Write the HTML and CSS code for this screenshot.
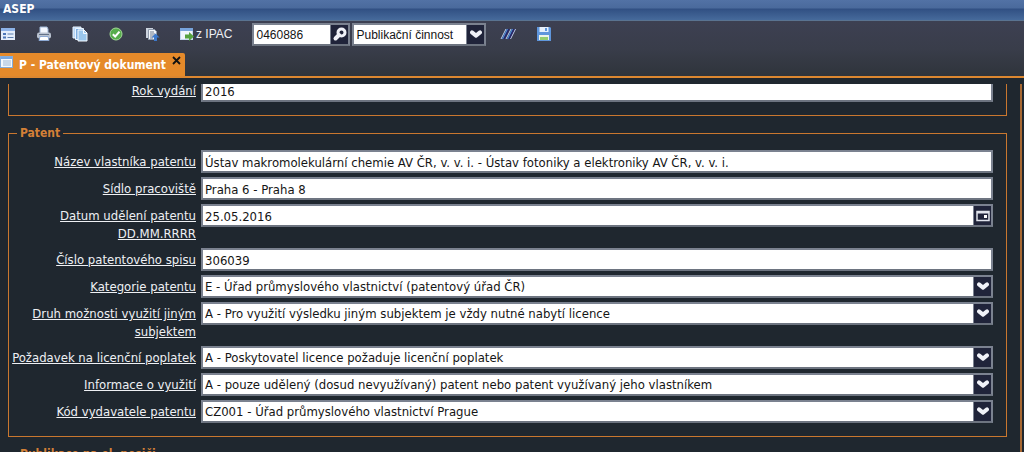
FILE: index.html
```html
<!DOCTYPE html>
<html lang="cs">
<head>
<meta charset="utf-8">
<title>ASEP</title>
<link rel="stylesheet" href="styles.css">
</head>
<body>
<svg class="defs" aria-hidden="true">
  <symbol id="heart" viewBox="0 0 12 9"><path d="M2 2.400 6 5.600 10 2.400" fill="none" stroke="#f0f2f8" stroke-width="4" stroke-linecap="round" stroke-linejoin="round"/></symbol>
</svg>
<header class="title">ASEP</header>
<div class="top">
  <div class="toolbar">
    <button class="tool" aria-label="Formulář"><svg width="16" height="16" viewBox="0 0 16 16"><rect x="1" y="2" width="14" height="12" fill="#e4eefb"/><path d="M1 2h14v3H1z" fill="#8eb3e8"/><path d="M3 7h3v2H3zM3 10.500h3v2H3z" fill="#4c76b8"/><path d="M7.500 8h6M7.500 11.500h6" stroke="#5d7fae"/></svg></button>
    <button class="tool" aria-label="Tisk"><svg width="16" height="16" viewBox="0 0 16 16"><path d="M4 1h7l1 2v5H4z" fill="#f4f8ff" stroke="#9fb6d6"/><rect x="1" y="6.500" width="14" height="6" rx="2" fill="#b9c2d0"/><path d="M3 8.500h10" stroke="#657287"/><path d="M4 10.500h8l1 4H3z" fill="#fff" stroke="#8da9d3"/></svg></button>
    <button class="tool" aria-label="Kopírovat"><svg width="16" height="16" viewBox="0 0 16 16"><path d="M1 1h8v11H1z" fill="#b7d5f5" stroke="#eaf4ff"/><path d="M3.500 2.500h8v11h-8z" fill="#7faee0" stroke="#eaf4ff"/><path d="M6 4h6l3 3v8H6z" fill="#9bc7ed" stroke="#f5faff"/><path d="M11.500 4v3.500H15" fill="none" stroke="#f5faff"/></svg></button>
    <button class="tool" aria-label="Potvrdit"><svg width="16" height="16" viewBox="0 0 16 16"><circle cx="8" cy="8" r="6" fill="#57ad4c" stroke="#a3da98"/><path d="M4.800 8.200 7.200 10.500 11.500 5.600" fill="none" stroke="#fff" stroke-width="2"/></svg></button>
    <button class="tool" aria-label="Odeslat"><svg width="16" height="16" viewBox="0 0 16 16"><path d="M2 2h7v10H2z" fill="#cdd4df"/><path d="M4.500 3.500h6l2 2v8h-8z" fill="#f2f5fa" stroke="#8f9aab"/><path d="M6 6h4M6 8h5M6 10h4M6 12h3" stroke="#6e7a8d"/><path d="M11.500 7.500 15.500 11.500H13V15h-3v-3.500H7.500z" fill="#3c78cb"/></svg></button>
    <button class="tool" aria-label="Import z IPAC"><svg width="16" height="16" viewBox="0 0 16 16"><rect x="0.500" y="2.500" width="12" height="11" fill="#eff5fc" stroke="#c5d8ef"/><path d="M0 2h13v3H0z" fill="#78a4dc"/><path d="M5 8.500h4V6l5 4.500L9 15v-2.500H5z" fill="#55a13f"/></svg><span>z IPAC</span></button>
    <div class="field find"><input aria-label="Číslo záznamu" value="0460886"><button class="adorn" aria-label="Hledat"><svg width="16" height="16" viewBox="0 0 16 16"><circle cx="9.500" cy="6.500" r="3.500" fill="none" stroke="#f0f2f8" stroke-width="3"/><path d="M7 9 3.500 12.500" stroke="#f0f2f8" stroke-width="4" stroke-linecap="round"/></svg></button></div>
    <div class="field base"><select aria-label="Databáze"><option>Publikační činnost</option></select><span class="adorn"><svg width="12" height="9"><use href="#heart"/></svg></span></div>
    <button class="tool" aria-label="Čárový kód"><svg width="16" height="16" viewBox="0 0 16 16"><path d="M1 13 6 3M6 13l5-10M10.500 13l5-10" stroke="#c3d1f2"/><path d="M2.500 13l5-10M7.500 13l5-10" stroke="#4a87cc" stroke-width="1.500"/><path d="M4 13 9 3M9 13l5-10" stroke="#25256e" stroke-width="1.500"/></svg></button>
    <button class="tool" aria-label="Uložit"><svg width="16" height="16" viewBox="0 0 16 16"><path d="M1 1h13l1 1v13H1z" fill="#5f96dc"/><path d="M3.500 1h9v5h-9z" fill="#e6f0fc"/><path d="M9 2h2v3H9z" fill="#5f96dc"/><path d="M3 9h10v5H3z" fill="#edf4ea"/><path d="M4 11h8v3H4z" fill="#94cd70"/></svg></button>
  </div>
  <nav class="tabs">
    <a class="tab" href="#patent"><svg width="14" height="14" viewBox="0 0 14 14"><rect x=".5" y="1.500" width="12" height="11" fill="#f4f8fd" stroke="#86acd9"/><path d="M1 2h11v2H1z" fill="#79a8e0"/><path d="M3 6h8M3 8h8M3 10h8" stroke="#9db8d8"/></svg><span>P - Patentový dokument</span></a>
    <button class="close" aria-label="Zavřít"><svg width="9" height="9" viewBox="0 0 9 9"><path d="M1 1 8 8M8 1 1 8" stroke="#111" stroke-width="1.800"/></svg></button>
  </nav>
</div>
<main class="content">
  <form class="form">
    <fieldset class="group scrolled">
      <div class="row"><label for="rok">Rok vydání</label><div class="field"><input id="rok" value="2016"></div></div>
    </fieldset>
    <fieldset class="group" id="patent">
      <legend>Patent</legend>
      <div class="row"><label for="vlastnik">Název vlastníka patentu</label><div class="field"><input id="vlastnik" value="Ústav makromolekulární chemie AV ČR, v. v. i. - Ústav fotoniky a elektroniky AV ČR, v. v. i."></div></div>
      <div class="row"><label for="sidlo">Sídlo pracoviště</label><div class="field"><input id="sidlo" value="Praha 6 - Praha 8"></div></div>
      <div class="row"><label for="datum">Datum udělení patentu DD.MM.RRRR</label><div class="field"><input id="datum" value="25.05.2016"><button type="button" class="adorn" aria-label="Kalendář"><svg width="14" height="12" viewBox="0 0 14 12"><path d="M1 1.500h12v9H1z" fill="none" stroke="#e0e3ec" stroke-width="1.500"/><path d="M1 2.500h12" stroke="#e0e3ec" stroke-width="2"/><path d="M8 5h3v3H8z" fill="#fff"/></svg></button></div></div>
      <div class="row"><label for="cislo">Číslo patentového spisu</label><div class="field"><input id="cislo" value="306039"></div></div>
      <div class="row"><label for="kategorie">Kategorie patentu</label><div class="field"><select id="kategorie"><option>E - Úřad průmyslového vlastnictví (patentový úřad ČR)</option></select><span class="adorn"><svg width="12" height="9"><use href="#heart"/></svg></span></div></div>
      <div class="row"><label for="druh">Druh možnosti využití jiným subjektem</label><div class="field"><select id="druh"><option>A - Pro využití výsledku jiným subjektem je vždy nutné nabytí licence</option></select><span class="adorn"><svg width="12" height="9"><use href="#heart"/></svg></span></div></div>
      <div class="row"><label for="poplatek">Požadavek na licenční poplatek</label><div class="field"><select id="poplatek"><option>A - Poskytovatel licence požaduje licenční poplatek</option></select><span class="adorn"><svg width="12" height="9"><use href="#heart"/></svg></span></div></div>
      <div class="row"><label for="vyuziti">Informace o využití</label><div class="field"><select id="vyuziti"><option>A - pouze udělený (dosud nevyužívaný) patent nebo patent využívaný jeho vlastníkem</option></select><span class="adorn"><svg width="12" height="9"><use href="#heart"/></svg></span></div></div>
      <div class="row"><label for="kod">Kód vydavatele patentu</label><div class="field"><select id="kod"><option>CZ001 - Úřad průmyslového vlastnictví Prague</option></select><span class="adorn"><svg width="12" height="9"><use href="#heart"/></svg></span></div></div>
    </fieldset>
    <fieldset class="group">
      <legend>Publikace na el. nosiči</legend>
    </fieldset>
  </form>
</main>
</body>
</html>
```
FILE: styles.css
```css
* { box-sizing: border-box; }

body {
  margin: 0;
  height: 100vh;
  overflow: hidden;
  display: flex;
  flex-direction: column;
  background: #1f272f;
  color: #eef0f4;
  font: 12px/18px "DejaVu Sans Condensed", "DejaVu Sans", sans-serif;
}

button, input, select { font: inherit; color: inherit; }
button { border: 0; padding: 0; background: none; }
svg { display: block; flex: none; }
.defs { position: absolute; width: 0; height: 0; }

.title {
  height: 21px;
  padding-left: 3px;
  border-bottom: 1px solid #5a7390;
  background: linear-gradient(#5272a5 0, #4a6a9c 8px, #315083 9px, #466a9b 20px);
  color: #fff;
  font-weight: bold;
}

.top {
  background: linear-gradient(#3d4052, #393d4a 28px, #2f343b);
  border-bottom: 2px solid #dc8730;
}

.toolbar {
  display: flex;
  align-items: center;
  height: 26px;
  gap: 20px;
}

.tool {
  display: flex;
  align-items: center;
  font-family: "Liberation Sans", Arial, sans-serif;
}

.toolbar .field {
  height: 23px;
  font-family: "Liberation Sans", Arial, sans-serif;
}
.find { width: 98px; }
.base { width: 134px; margin-left: -18px; margin-right: -6px; }

.tabs {
  display: flex;
  align-items: flex-end;
  margin-top: 6px;
}

.tab, .close { background: #e58a2a; height: 23px; }
.tab {
  display: flex;
  align-items: center;
  gap: 5px;
  color: #fff;
  font-weight: bold;
  text-decoration: none;
}
.tab svg { align-self: flex-start; margin-top: 2px; }
.close { width: 19px; padding: 3px 4px 11px 6px; border-top-right-radius: 2px; }

.content {
  flex: 1;
  min-height: 0;
  overflow: hidden;
  margin: 6px 2px 0 0;
  border-right: 2px solid #a86832;
}

.form {
  padding: 0 13px 0 8px;
  font-size: 13px;
}

.group {
  min-width: 0;
  margin: 0 0 8px;
  padding: 8px 13px 13px 1px;
  border: 1px solid #c9772f;
}
.scrolled { margin-top: -5px; padding-top: 0; border-top: 0; }

legend {
  margin-left: 7px;
  padding: 0 3px;
  color: #d48037;
  font-size: 12px;
  font-weight: bold;
}

.row {
  display: grid;
  grid-template-columns: 186px 1fr;
  gap: 5px;
  align-items: start;
}
.row + .row { margin-top: 4px; }

label {
  padding: 3px 0 1px;
  text-align: right;
  text-decoration: underline;
}

.field {
  display: flex;
  height: 23px;
  border: 2px solid #7b8290;
  border-color: #7b8290 #7b8290 #6d7480;
  background: #fff;
  color: #151515;
}

.field input, .field select {
  flex: 1;
  min-width: 0;
  height: 19px;
  margin: 0;
  padding: 1px 2px 0;
  border: 0;
  outline: 0;
  background: #fff;
  appearance: none;
}

.adorn {
  display: flex;
  flex: none;
  width: 18px;
  align-items: center;
  justify-content: center;
  border-left: 1px solid #7b8290;
  background: #20243a;
  pointer-events: none;
}
```
